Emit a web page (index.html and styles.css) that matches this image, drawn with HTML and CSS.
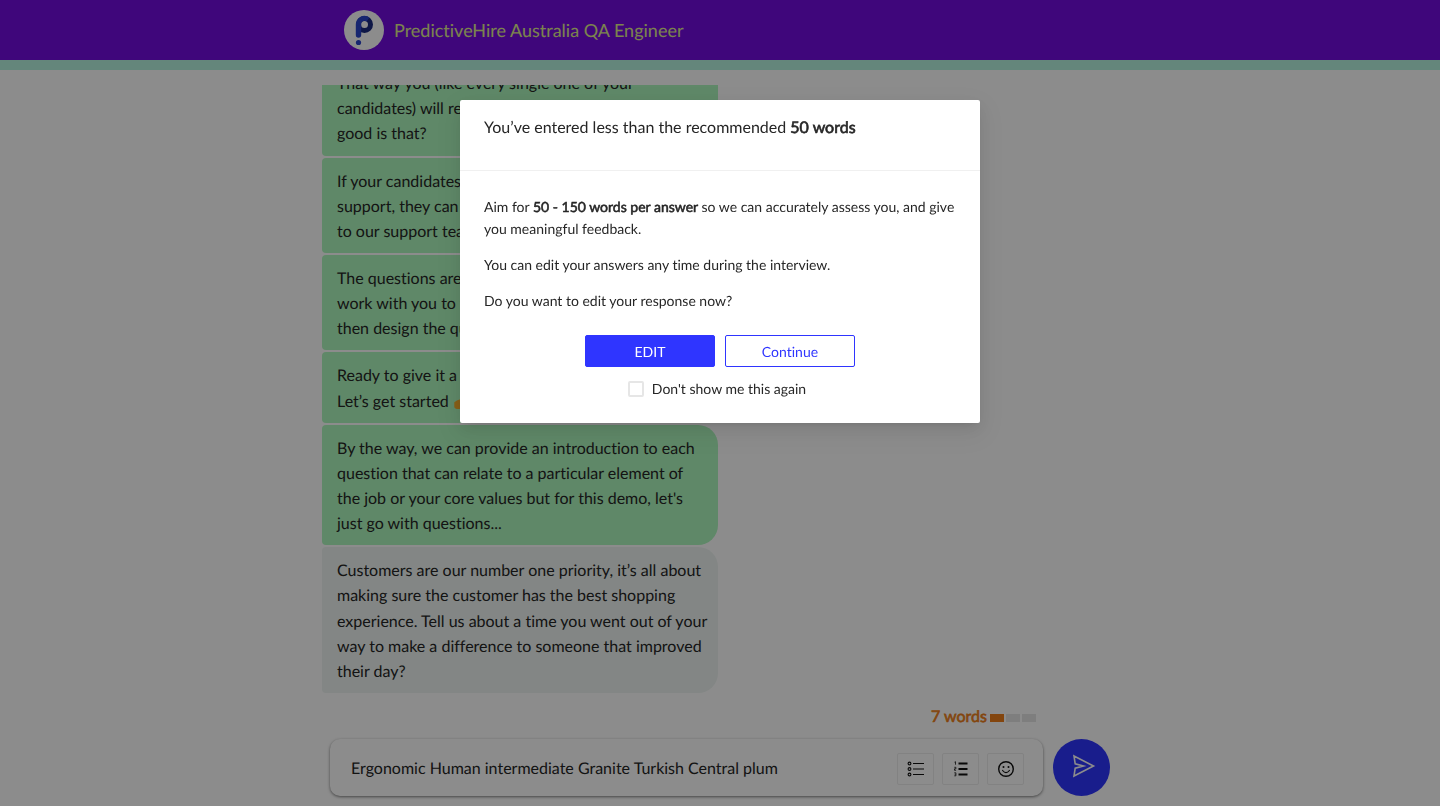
FILE: index.html
```
<!DOCTYPE html>
<html lang="en">
<head>
<meta charset="utf-8">
<meta name="viewport" content="width=device-width, initial-scale=1">
<title>PredictiveHire Australia QA Engineer</title>
<link rel="stylesheet" href="styles.css">
</head>
<body>
<div class="app">
  <header class="topbar">
    <div class="topbar-inner">
      <svg class="logo" viewBox="0 0 40 40" aria-hidden="true">
        <circle cx="20" cy="20" r="20" fill="#fff"/>
        <circle cx="20.500" cy="14.500" r="6" fill="none" stroke="#1a2a80" stroke-width="5"/>
        <path d="M14.500 14.500v10.500" stroke="#2a45cc" stroke-width="5.400" stroke-linecap="round" fill="none"/>
        <path d="M14.500 15a6 6 0 0 1 9.500-5.500" fill="none" stroke="#2a45cc" stroke-width="5"/>
        <circle cx="14.500" cy="32.500" r="2.600" fill="#2a45cc"/>
      </svg>
      <h1 class="title">PredictiveHire Australia QA Engineer</h1>
    </div>
  </header>
  <main class="chat">
    <div class="messages">
      <p class="bubble">That way you (like every single one of your candidates) will receive<br>good is that?</p>
      <p class="bubble">If your candidates<br>support, they can<br>to our support team</p>
      <p class="bubble">The questions are<br>work with you to find<br>then design the questions</p>
      <p class="bubble">Ready to give it a go?<br>Let’s get started <svg class="hand" viewBox="0 0 18 14" aria-hidden="true"><path d="M0 6q3-2 6-3l9 1q2 1 0 3h-5l1 4q0 3-3 3H3q-2 0-3-2z" fill="#f5ac2b"/></svg></p>
      <p class="bubble bubble-last">By the way, we can provide an introduction to each question that can relate to a particular element of the job or your core values but for this demo, let's just go with questions...</p>
      <p class="bubble bubble-question">Customers are our number one priority, it’s all about making sure the customer has the best shopping experience. Tell us about a time you went out of your way to make a difference to someone that improved their day?</p>
    </div>
    <div class="word-count">
      <span class="count faux-bold">7 words</span>
      <span class="bar bar-on"></span><span class="bar"></span><span class="bar"></span>
    </div>
    <form class="composer">
      <div class="answer-box">
        <input class="answer" type="text" aria-label="Your answer" value="Ergonomic Human intermediate Granite Turkish Central plum">
        <div class="tools">
          <button class="tool" type="button" aria-label="Bulleted list">
            <svg width="18" height="16" viewBox="0 0 18 16" fill="none" stroke="#111"><g stroke-width="1.100"><circle cx="2.500" cy="2.500" r="1.400"/><circle cx="2.500" cy="8" r="1.400"/><circle cx="2.500" cy="13.500" r="1.400"/></g><path d="M6 2.500h11M6 8h11M6 13.500h11"/></svg>
          </button>
          <button class="tool" type="button" aria-label="Numbered list">
            <svg width="18" height="16" viewBox="0 0 18 16" fill="none" stroke="#111"><path d="M6.500 2.500h9M6.500 8h9M6.500 13.500h9" stroke-width="1.800"/><path d="M2.500 1.200l1-.5v3M2.300 6.300h1.600v1.500H2.500v1.500h1.600M2.300 11.800h1.600v3H2.300M2.700 13.300h1" stroke-width=".8"/></svg>
          </button>
          <button class="tool" type="button" aria-label="Emoji">
            <svg width="18" height="18" viewBox="0 0 18 18" fill="none" stroke="#111"><circle cx="9" cy="9" r="7.300" stroke-width="1.400"/><path d="M5.600 10.500q3.400 4.400 6.800 0" stroke-width="1.200" stroke-linecap="round"/><circle cx="6.500" cy="7" r="1" fill="#111" stroke="none"/><circle cx="11.500" cy="7" r="1" fill="#111" stroke="none"/></svg>
          </button>
        </div>
      </div>
      <button class="send" type="button" aria-label="Send">
        <svg width="24" height="24" viewBox="0 0 24 24" fill="none" stroke="#fff" stroke-width="1.600"><path d="M2 2l19.500 10L2 22l1.200-7.800L11.500 12 3.200 9.800z"/></svg>
      </button>
    </form>
  </main>
</div>
<div class="mask">
  <section class="modal" role="dialog" aria-modal="true" aria-labelledby="modal-title">
    <h2 class="modal-title" id="modal-title">You’ve entered less than the recommended <b class="faux-bold">50 words</b></h2>
    <div class="modal-body">
      <p>Aim for <b class="faux-bold">50 - 150 words per answer</b> so we can accurately assess you, and give you meaningful feedback.</p>
      <p>You can edit your answers any time during the interview.</p>
      <p>Do you want to edit your response now?</p>
      <div class="actions">
        <button class="btn btn-primary" type="button">EDIT</button>
        <button class="btn" type="button">Continue</button>
      </div>
      <label class="again"><input class="check" type="checkbox"><span>Don't show me this again</span></label>
    </div>
  </section>
</div>
</body>
</html>
```
FILE: styles.css
```
* { box-sizing: border-box; }
body {
  margin: 0;
  font: 16px/1.5715 Lato, "Liberation Sans", sans-serif;
  font-variant-ligatures: no-common-ligatures;
  text-rendering: geometricPrecision;
  color: #262626;
  background: #fff;
}
button, input { font: inherit; color: inherit; text-rendering: inherit; }
p, h1, h2 { margin: 0; }
.app {
  display: flex;
  flex-direction: column;
  height: 100vh;
}
.topbar {
  background: #740be1;
  border-bottom: 10px solid #b6f4e1;
}
.topbar-inner {
  display: flex;
  align-items: center;
  gap: 10px;
  height: 60px;
  max-width: 796px;
  margin: 0 auto;
  padding: 0 22px;
}
.logo { width: 40px; height: 40px; }
.title {
  font-size: 18px;
  font-weight: 400;
  color: #e1f08c;
}
.chat {
  display: flex;
  flex-direction: column;
  flex: 1;
  min-height: 0;
  width: 100%;
  max-width: 796px;
  margin: 0 auto;
  padding: 15px 0 10px;
}
.messages {
  display: flex;
  flex-direction: column;
  justify-content: flex-end;
  align-items: flex-start;
  gap: 2px;
  flex: 1;
  min-height: 0;
  overflow: hidden;
}
.bubble {
  flex: none;
  width: 396px;
  max-width: 100%;
  padding: 11px 8px 9px 15px;
  border-radius: 4px;
  background: #adf7bd;
}
.bubble-last { border-radius: 4px 20px 20px 4px; }
.bubble-question {
  border-radius: 4px 20px 20px 4px;
  background: #eef5f2;
}
.hand { width: 18px; height: 12px; vertical-align: -2px; }
.word-count {
  display: flex;
  align-items: center;
  justify-content: flex-end;
  gap: 2px;
  height: 46px;
  padding: 2px 82px 0 0;
}
.count { margin-right: 1px; color: #ee7f1a; }
.faux-bold {
  font-weight: 400;
  -webkit-text-stroke: 0.04em currentColor;
}
.bar {
  width: 14px;
  height: 8px;
  margin-top: 1px;
  background: #e6e6e6;
}
.bar-on { background: #ee7f1a; }
.composer {
  display: flex;
  gap: 10px;
  padding: 0 8px;
}
.answer-box {
  display: flex;
  align-items: center;
  flex: 1;
  height: 57px;
  padding: 0 19px 0 21px;
  border-radius: 10px;
  background: #fff;
  box-shadow: 0 1px 3px rgba(0, 0, 0, 0.5);
}
.answer {
  flex: 1;
  min-width: 0;
  padding: 2px 0 0;
  border: 0;
  outline: 0;
  background: none;
}
.tools { display: flex; gap: 8px; padding-top: 2px; }
.tool {
  display: flex;
  align-items: center;
  justify-content: center;
  width: 37px;
  height: 32px;
  padding: 0;
  border: 1px solid #ededed;
  border-radius: 2px;
  background: none;
}
.send {
  display: flex;
  align-items: center;
  justify-content: center;
  width: 57px;
  height: 57px;
  padding: 0 0 4px 4px;
  border: 0;
  border-radius: 50%;
  background: #2f35ff;
}
.mask {
  position: fixed;
  inset: 0;
  padding: 100px 16px 16px;
  background: rgba(0, 0, 0, 0.45);
}
.modal {
  max-width: 520px;
  margin: 0 auto;
  border-radius: 2px;
  background: #fff;
  box-shadow: 0 3px 6px -4px rgba(0, 0, 0, 0.12), 0 6px 16px rgba(0, 0, 0, 0.08), 0 9px 28px 8px rgba(0, 0, 0, 0.05);
}
.modal-title {
  padding: 17px 24px 31px;
  border-bottom: 1px solid #f0f0f0;
  font-size: 16px;
  font-weight: 400;
  line-height: 22px;
}
.modal-body {
  padding: 25px 24px 23px;
  font-size: 14px;
  line-height: 22px;
}
.modal-body p { margin-bottom: 14px; }
.actions {
  display: flex;
  justify-content: center;
  gap: 10px;
  margin-top: 23px;
}
.btn {
  width: 130px;
  height: 32px;
  padding: 2px 0 0;
  border: 1px solid #2f35ff;
  border-radius: 2px;
  color: #2f35ff;
  background: #fff;
}
.btn-primary { color: #fff; background: #2f35ff; }
.again {
  display: flex;
  align-items: center;
  justify-content: center;
  gap: 8px;
  margin-top: 11px;
  padding-right: 6px;
}
.check {
  appearance: none;
  width: 16px;
  height: 16px;
  margin: 0;
  border: 2px solid #e6e6e6;
  border-radius: 2px;
  background: #fff;
}
```
